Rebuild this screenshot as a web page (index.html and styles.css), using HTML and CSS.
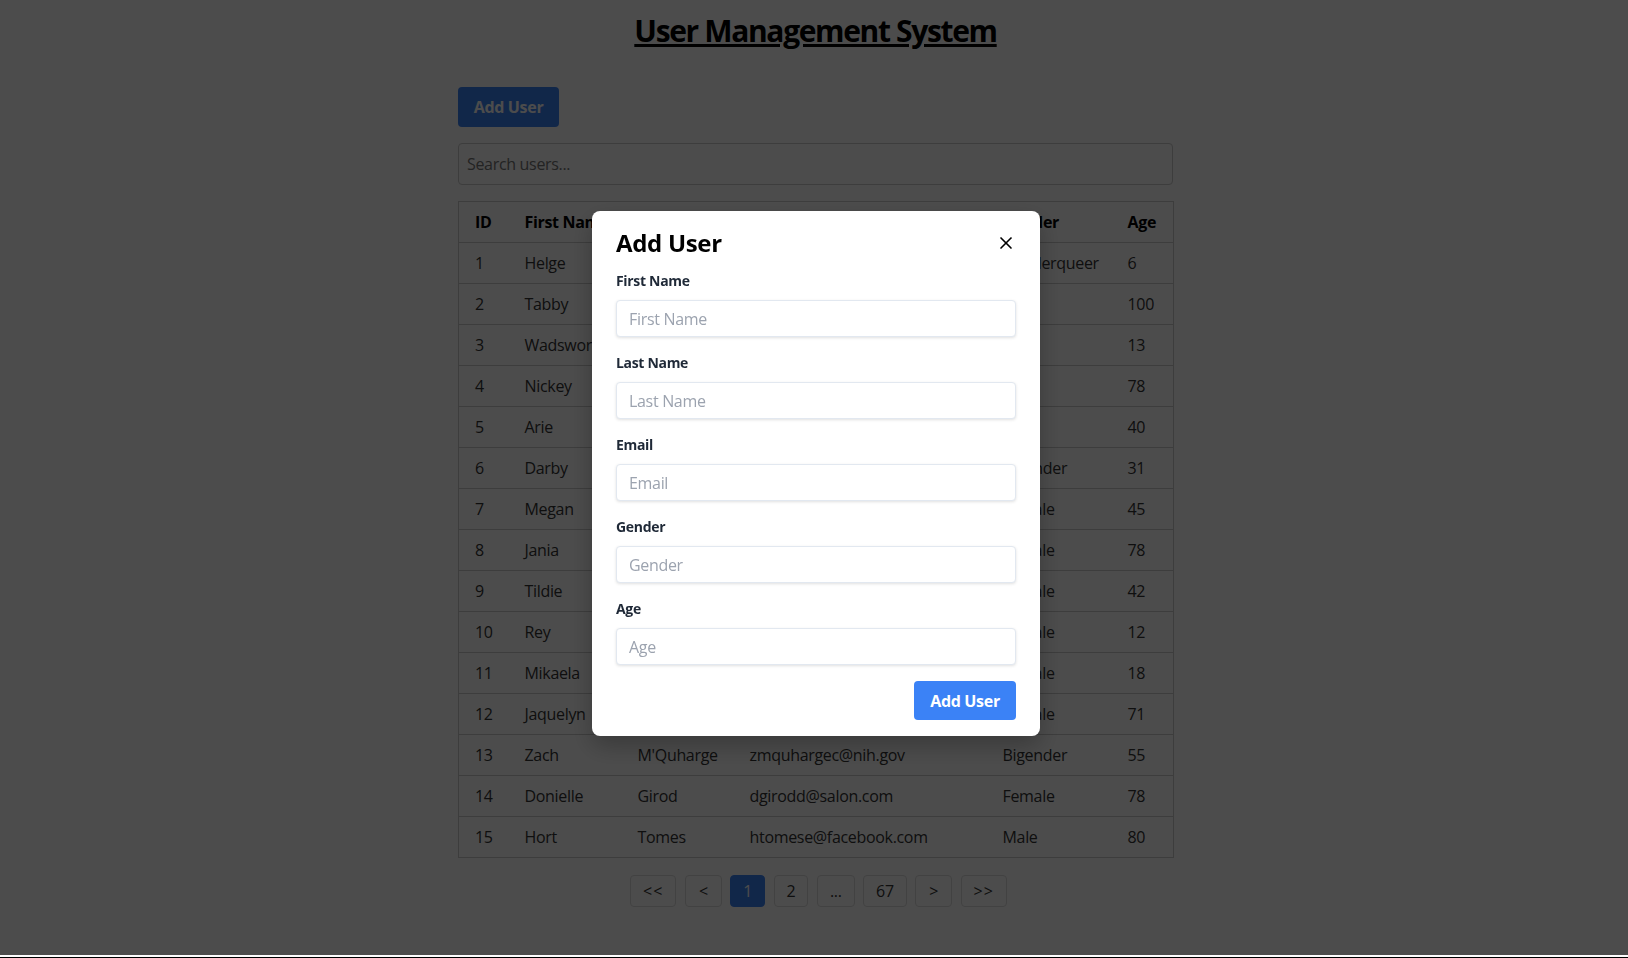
FILE: index.html
```html
<!DOCTYPE html>
<html lang="en">
<head>
<meta charset="utf-8">
<title>User Management System</title>
<link rel="stylesheet" href="styles.css">
</head>
<body>
<div class="page">
  <h1 class="title">User Management System</h1>
  <div class="toolbar"><button class="btn btn-add">Add User</button></div>
  <input class="search" type="text" placeholder="Search users...">
  <table class="users">
    <thead>
      <tr><th class="c-id">ID</th><th class="c-first">First Name</th><th class="c-last">Last Name</th><th class="c-email">Email</th><th class="c-gender">Gender</th><th class="c-age">Age</th></tr>
    </thead>
    <tbody>
      <tr><td>1</td><td>Helge</td><td>Ledgister</td><td>hledgister0@ibm.com</td><td>Genderqueer</td><td>6</td></tr>
      <tr><td>2</td><td>Tabby</td><td>Gouldie</td><td>tgouldie1@usda.gov</td><td>Male</td><td>100</td></tr>
      <tr><td>3</td><td>Wadsworth</td><td>Pinks</td><td>wpinks2@hud.gov</td><td>Male</td><td>13</td></tr>
      <tr><td>4</td><td>Nickey</td><td>Cuell</td><td>ncuell3@cnn.com</td><td>Male</td><td>78</td></tr>
      <tr><td>5</td><td>Arie</td><td>Bonsall</td><td>abonsall4@gov.uk</td><td>Male</td><td>40</td></tr>
      <tr><td>6</td><td>Darby</td><td>Jerrans</td><td>djerrans5@ning.com</td><td>Bigender</td><td>31</td></tr>
      <tr><td>7</td><td>Megan</td><td>Ruddle</td><td>mruddle6@yale.edu</td><td>Female</td><td>45</td></tr>
      <tr><td>8</td><td>Jania</td><td>Oxtoby</td><td>joxtoby7@cdc.gov</td><td>Female</td><td>78</td></tr>
      <tr><td>9</td><td>Tildie</td><td>Aspden</td><td>taspden8@msn.com</td><td>Female</td><td>42</td></tr>
      <tr><td>10</td><td>Rey</td><td>Gosnoll</td><td>rgosnoll9@php.net</td><td>Female</td><td>12</td></tr>
      <tr><td>11</td><td>Mikaela</td><td>Harrop</td><td>mharropa@ted.com</td><td>Female</td><td>18</td></tr>
      <tr><td>12</td><td>Jaquelyn</td><td>Esslemont</td><td>jesslemontb@bbc.co.uk</td><td>Female</td><td>71</td></tr>
      <tr><td>13</td><td>Zach</td><td>M'Quharge</td><td>zmquhargec@nih.gov</td><td>Bigender</td><td>55</td></tr>
      <tr><td>14</td><td>Donielle</td><td>Girod</td><td>dgirodd@salon.com</td><td>Female</td><td>78</td></tr>
      <tr><td>15</td><td>Hort</td><td>Tomes</td><td>htomese@facebook.com</td><td>Male</td><td>80</td></tr>
    </tbody>
  </table>
  <nav class="pager">
    <button class="pg pg-edge">&lt;&lt;</button>
    <button class="pg pg-arrow">&lt;</button>
    <button class="pg pg-active">1</button>
    <button class="pg">2</button>
    <button class="pg">...</button>
    <button class="pg">67</button>
    <button class="pg pg-arrow">&gt;</button>
    <button class="pg pg-edge">&gt;&gt;</button>
  </nav>
</div>

<div class="overlay">
  <div class="modal">
    <div class="modal-head">
      <h2 class="modal-title">Add User</h2>
      <button class="close" aria-label="Close">
        <svg width="20" height="20" viewBox="0 0 24 24" fill="none" stroke="currentColor" stroke-width="2" stroke-linecap="round" stroke-linejoin="round"><path d="M18 6 6 18"/><path d="m6 6 12 12"/></svg>
      </button>
    </div>
    <form class="form">
      <div class="field"><label>First Name</label><input type="text" placeholder="First Name"></div>
      <div class="field"><label>Last Name</label><input type="text" placeholder="Last Name"></div>
      <div class="field"><label>Email</label><input type="text" placeholder="Email"></div>
      <div class="field"><label>Gender</label><input type="text" placeholder="Gender"></div>
      <div class="field"><label>Age</label><input type="text" placeholder="Age"></div>
      <div class="actions"><button type="button" class="btn btn-submit">Add User</button></div>
    </form>
  </div>
</div>
<div class="edge"></div>
</body>
</html>
```
FILE: styles.css
```css
* { box-sizing: border-box; }

body {
  margin: 0;
  background: #fff;
  font-family: "Open Sans", "Noto Sans", sans-serif;
  letter-spacing: -0.02em;
  color: #333;
}

.page {
  width: 715px;
  margin-left: calc(50% - 356px);
}

.title {
  margin: 9px 0 0;
  font-size: 30px;
  line-height: 44px;
  font-weight: 700;
  letter-spacing: -0.045em;
  text-align: center;
  text-decoration: underline;
  color: #000;
}

.toolbar {
  margin-top: 34px;
  display: flex;
}

.btn {
  height: 40px;
  padding: 0 16px;
  border: none;
  border-radius: 4px;
  background: #3b82f6;
  color: #fff;
  font: inherit;
  font-size: 16px;
  font-weight: 700;
  letter-spacing: inherit;
  white-space: nowrap;
}

.btn-add { width: 101px; padding: 0; }

.search {
  display: block;
  width: 100%;
  height: 42px;
  margin-top: 16px;
  padding: 0 8px;
  border: 1px solid #ccc;
  border-radius: 4px;
  font: inherit;
  font-size: 16px;
  letter-spacing: inherit;
}
.search::placeholder { color: #757575; }

.users {
  width: 100%;
  margin-top: 16px;
  border-collapse: collapse;
  table-layout: fixed;
  border: 1px solid #ccc;
  font-size: 16px;
}
.users th, .users td {
  padding: 8px 16px;
  line-height: 24px;
  text-align: left;
  border-bottom: 1px solid #ccc;
  white-space: nowrap;
  overflow: hidden;
}
.users th { font-weight: 700; color: #000; }
.users td { color: #333; }
.c-id { width: 50px; }
.c-first { width: 113px; }
.c-last { width: 112px; }
.c-email { width: 253px; }
.c-gender { width: 125px; }
.c-age { width: 62px; }

.pager {
  display: flex;
  justify-content: center;
  gap: 8.5px;
  margin-top: 17px;
  padding-left: 6px;
}
.pg {
  height: 32px;
  padding: 0 12px;
  border: 1px solid #ddd;
  border-radius: 4px;
  background: #fff;
  color: #333;
  font: inherit;
  font-size: 16px;
  letter-spacing: inherit;
}
.pg-arrow { padding: 0 13px; }
.pg-edge { padding: 0 12px; letter-spacing: 1px; }
.pg-active { background: #3b82f6; border-color: #3b82f6; color: #fff; }

.overlay {
  position: fixed;
  top: 0;
  left: 0;
  right: 0;
  bottom: 3px;
  background: rgba(0, 0, 0, 0.7);
  display: flex;
  justify-content: center;
  align-items: flex-start;
  padding-top: 211px;
  padding-left: 4px;
}

.modal {
  width: 448px;
  background: #fff;
  border-radius: 8px;
  padding: 16px 24px;
  box-shadow: 0 10px 25px rgba(0, 0, 0, 0.25);
}

.modal-head {
  display: flex;
  justify-content: space-between;
  align-items: center;
  height: 32px;
  margin-bottom: 12px;
}
.modal-title {
  margin: 0;
  font-size: 24px;
  line-height: 32px;
  font-weight: 700;
  color: #000;
}
.close {
  display: flex;
  width: 20px;
  height: 20px;
  padding: 0;
  border: none;
  background: none;
  color: #000;
}

.field { margin-bottom: 16px; }
.field label {
  display: block;
  font-size: 14px;
  line-height: 20px;
  font-weight: 700;
  margin-bottom: 9px;
  color: #1f2937;
}
.field input {
  display: block;
  width: 100%;
  height: 37px;
  padding: 0 12px;
  border: 1px solid #e2e8f0;
  border-radius: 4px;
  box-shadow: 0 1px 3px rgba(0, 0, 0, 0.12);
  font: inherit;
  font-size: 16px;
  letter-spacing: inherit;
  color: #374151;
}
.field input::placeholder { color: #9ca3af; }

.actions { display: flex; justify-content: flex-end; }
.btn-submit { width: 102px; height: 39px; }

.edge {
  position: fixed;
  left: 0;
  right: 0;
  bottom: 0;
  height: 1px;
  background: #000;
}
```
